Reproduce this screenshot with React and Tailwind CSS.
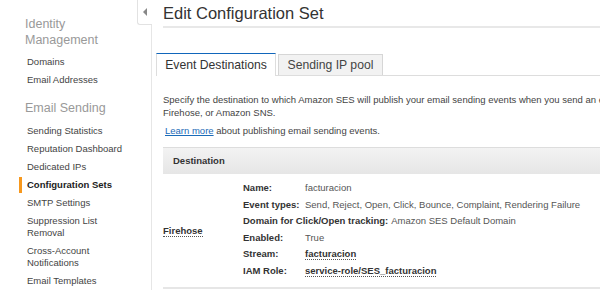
import React from "react";

const navGroups = [
  {
    title: ["Identity", "Management"],
    items: ["Domains", "Email Addresses"],
  },
  {
    title: ["Email Sending"],
    items: [
      "Sending Statistics",
      "Reputation Dashboard",
      "Dedicated IPs",
      "Configuration Sets",
      "SMTP Settings",
      "Suppression List Removal",
      "Cross-Account Notifications",
      "Email Templates",
    ],
  },
];

const details = [
  { label: "Name:", value: "facturacion" },
  { label: "Event types:", value: "Send, Reject, Open, Click, Bounce, Complaint, Rendering Failure" },
  { label: "Domain for Click/Open tracking:", value: "Amazon SES Default Domain" },
  { label: "Enabled:", value: "True" },
  { label: "Stream:", value: "facturacion", strong: true },
  { label: "IAM Role:", value: "service-role/SES_facturacion", strong: true },
];

const Sidebar = () => (
  <aside className="relative w-[152px] shrink-0 border-r border-[#e6e6e6] bg-white">
    {/* collapse tab */}
    <div className="absolute right-[-1px] top-0 flex h-[25px] w-[15px] items-center justify-center rounded-bl-[3px] border-b border-l border-[#e2e2e2] bg-white">
      <span className="h-0 w-0 border-y-[4px] border-r-[4px] border-y-transparent border-r-[#888]" />
    </div>
    <div className="pl-[25px] pt-[16px]">
      {navGroups.map((g, gi) => (
        <div key={gi} className={gi ? "mt-[14px]" : ""}>
          <div className="text-[12.5px] leading-[16px] text-[#999]">
            {g.title.map((t) => (
              <div key={t}>{t}</div>
            ))}
          </div>
          <ul className={`${gi ? "mt-[9px]" : "mt-[8px]"} flex flex-col gap-[6px]`}>
            {g.items.map((it) => {
              const active = it === "Configuration Sets";
              return (
                <li
                  key={it}
                  className={`relative w-[100px] pl-[2px] text-[9.5px] leading-[12px] ${
                    active ? "font-bold text-[#222]" : "text-[#444]"
                  }`}
                >
                  {active && (
                    <span className="absolute left-[-6px] top-[-2px] h-[16px] w-[3px] bg-[#f7981d]" />
                  )}
                  {it}
                </li>
              );
            })}
          </ul>
        </div>
      ))}
    </div>
  </aside>
);

export default function App() {
  return (
    <div
      className="flex h-[290px] w-[600px] overflow-hidden bg-white text-[#444]"
      style={{ fontFamily: '"Liberation Sans", Arial, sans-serif' }}
    >
      <Sidebar />
      <main className="min-w-0 flex-1 overflow-hidden pl-[11px]">
        <h1 className="border-b-2 border-[#e8e8e8] pb-[3px] pt-[4px] text-[16.5px] leading-[19px] text-[#333] whitespace-nowrap">
          Edit Configuration Set
        </h1>

        {/* tabs */}
        <div className="ml-[-7px] mt-[25px] flex items-end border-b border-[#ddd] text-[12.2px] whitespace-nowrap">
          <div className="mb-[-1px] h-[23px] w-[120px] border-x border-t border-[#ddd] border-t-[#1166bb] bg-white text-center leading-[22px] text-[#333]">
            Event Destinations
          </div>
          <div className="ml-[2px] h-[21px] w-[105px] border-x border-t border-[#d6d6d6] bg-[#f2f2f2] text-center leading-[20px] text-[#444]">
            Sending IP pool
          </div>
        </div>

        {/* wide paragraph: runs past the window edge like the console view */}
        <p className="mt-[17px] w-[690px] text-[9.5px] leading-[13px] text-[#444]">
          Specify the destination to which Amazon SES will publish your email sending events when you send an email. You can use Amazon CloudWatch, Amazon Kinesis Firehose, or Amazon SNS.
        </p>
        <p className="mt-[5px] pl-[2px] text-[9.5px] leading-[13px] whitespace-nowrap">
          <span className="text-[#1b6bb8] underline">Learn more</span> about publishing email sending events.
        </p>

        {/* destination table */}
        <div className="mt-[10px] border-t border-[#ddd] bg-gradient-to-b from-[#f3f3f3] to-[#e6e6e6] pl-[10px] text-[9.5px] font-bold leading-[26px] text-[#333]">
          Destination
        </div>
        <div className="flex items-center border-b-2 border-[#e6e6e6] pb-[7px] pt-[6px] text-[9.5px] whitespace-nowrap">
          <div className="w-[80px] shrink-0 pt-[3px] font-bold text-[#333]">
            <span className="border-b border-dotted border-[#555]">Firehose</span>
          </div>
          <div className="flex flex-col">
            {details.map((d) => (
              <div key={d.label} className="h-[16.6px] leading-[16px]">
                <span className="inline-block min-w-[62px] pr-[3px] font-bold text-[#333]">{d.label}</span>
                {d.strong ? (
                  <span className="border-b border-dotted border-[#555] font-bold text-[#333]">{d.value}</span>
                ) : (
                  <span className="text-[#555]">{d.value}</span>
                )}
              </div>
            ))}
          </div>
        </div>
      </main>
    </div>
  );
}
